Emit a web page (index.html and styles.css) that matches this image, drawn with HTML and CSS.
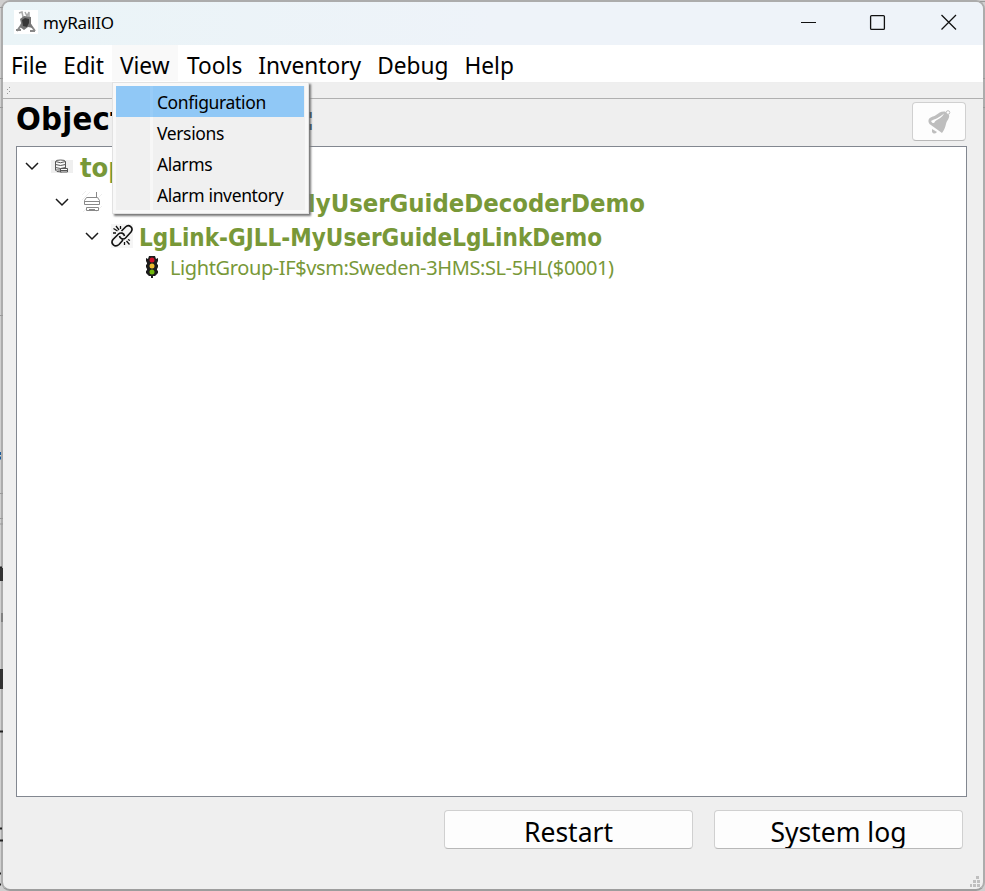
FILE: index.html
```html
<!DOCTYPE html>
<html lang="en">
<head>
<meta charset="utf-8">
<title>myRailIO</title>
<link rel="stylesheet" href="styles.css">
</head>
<body>
<svg class="backdrop" width="985" height="891" viewBox="0 0 985 891" aria-hidden="true">
  <path d="M0 7.500h3M0 78.500h3M0 107.500h3M0 315.500h3M0 493.500h3M0 518.500h3M0 524h3M980 1.500h5M983 78.500h2M983 107.500h2" stroke="#999"/>
  <path d="M0 453.500h1M0 458h1" stroke="#185a9a" stroke-width="3"/>
  <path d="M0 567.500h2M0 731.500h3M0 828.500h2M0 840.500h3M0 873.500h1M0 884.500h1" stroke="#222" stroke-width="2"/>
  <path d="M1.500 568v13M1.500 669v20" stroke="#333" stroke-width="3"/>
  <path d="M2 613v9" stroke="#555"/>
</svg>
<div class="window">
  <header class="titlebar">
    <svg class="appicon" width="24" height="24" viewBox="0 0 24 24"><path d="M0 0h24v24H0z" fill="#fff"/><path d="M5 3l3-1 1 5M11 2l2 4 2-4v5" stroke="#aaa" stroke-width="1.500" fill="none"/><path d="M3 21l5-7M21 21l-5-7M2 20h5M16 21h5" stroke="#888" stroke-width="2" fill="none"/><path d="M6 9l4-3 7 1v7l2 4-5-1-4 3-4-3 1-4z" fill="#777"/><path d="M8 10l3-2 4 1v4l-2 4-4-1z" fill="#383838"/></svg>
    <span class="apptitle">myRailIO</span>
    <svg class="controls" width="160" height="20" viewBox="0 0 160 20" fill="none" stroke="#111"><path d="M1 10.500h15"/><rect x="70.600" y="3.600" width="13.800" height="13.800" rx="1" stroke-width="1.300"/><path d="M141.500 3l14.500 14.500M156 3l-14.500 14.500" stroke-width="1.300"/></svg>
  </header>
  <nav class="menubar">
    <span class="item">File</span><span class="item">Edit</span>
    <div class="item open">View
      <div class="menu">
        <div class="entry active">Configuration</div>
        <div class="entry">Versions</div>
        <div class="entry">Alarms</div>
        <div class="entry">Alarm inventory</div>
      </div>
    </div>
    <span class="item tools">Tools</span><span class="item">Inventory</span><span class="item">Debug</span><span class="item">Help</span>
  </nav>
  <div class="toolbar"><svg width="4" height="8" viewBox="0 0 4 8" fill="#999"><path d="M2 0h1v1h-1zM0 2h1v1h-1zM2 4h1v1h-1zM0 6h1v1h-1z"/></svg></div>
  <main class="content">
    <div class="heading">
      <h1><span>Object</span><span>:</span></h1>
      <button class="bell"><svg width="26" height="26" viewBox="0 0 26 26"><path d="M2.500 11C4 7.500 7 8 10 6C13 4 15 2 19 2.500L23 6C24 9 21 11 20 15C19 19 18 21 16 24L3.500 15Q2 13 2.500 11z" fill="#bebebe"/><path d="M5 12C9 10 13 9 18 4.500C16 9 12 10 9 12.500Q8 15 6 13.500z" fill="#fff"/><circle cx="22" cy="3.500" r="1.800" fill="#fff" stroke="#bebebe"/><path d="M6 20l5 3q-3 3-5 0z" fill="#bebebe"/></svg></button>
    </div>
    <section class="tree">
      <div class="node top"><svg class="chev" width="14" height="10" viewBox="0 0 14 10"><path d="M1 2l6 6 6-6"/></svg>
        <svg class="icon" width="22" height="16" viewBox="0 0 22 16"><path d="M0 2h22v13H0z" fill="#efefef"/><g fill="#fafafa" stroke="#555"><path d="M4.500 3.500q0-1.500 5-1.500t5 1.500v8.500h-10z"/><path d="M4.500 3.500q5 2.500 10 0M4.500 6.500q5 2 10 0M4.500 9.500q5 2 10 0M4.500 12q0 2 6 2"/><path d="M9.500 10.500h7v3.500h-7zM9.500 12.500h7"/></g></svg>
        <span class="name">top</span></div>
      <div class="node decoder"><svg class="chev" width="14" height="10" viewBox="0 0 14 10"><path d="M1 2l6 6 6-6"/></svg>
        <svg class="icon" width="22" height="24" viewBox="0 0 22 24"><path d="M1 5l4-4M1 10l8-8M2 22l4-4M15 22l6-6M17 8l4-4" stroke="#eee"/><g fill="#fff" stroke="#888"><path d="M5.500 7.500h11l2 3v4h-15v-4zM3.500 11.500h15M15.500 2v6M5.500 17.500h12v3h-12zM8 19.500h6"/></g></svg>
        <span class="name">MyUserGuideDecoderDemo</span></div>
      <div class="node link"><svg class="chev" width="14" height="10" viewBox="0 0 14 10"><path d="M1 2l6 6 6-6"/></svg>
        <svg class="icon" width="22" height="24" viewBox="0 0 22 24" fill="none" stroke="#111" stroke-width="1.300"><path d="M0 0h22v24H0z" fill="#f5f5f5" stroke="none"/><path d="M10.500 7l4-4c3.500-3.500 8.500 1 5.500 5l-5.500 6c-2 2-5.500 1-6-2M12 16l-4 4.500c-4 3.500-9-1-6-5l5.500-5.500c2-2 5.500-1 6 2" stroke-width="1.600"/><path d="M2.500 4.500l4 2.500M5 2l3 4M9.500 2v3M2 9h3M13.500 18v3M15.500 17l3 3.500M17 15.500l2 1"/></svg>
        <span class="name">LgLink-GJLL-MyUserGuideLgLinkDemo</span></div>
      <div class="node light">
        <svg class="icon" width="14" height="24" viewBox="0 0 14 24"><path d="M1 3l2 1 1-3h6l1 3 2-1v3l-1 2v2l1-1v3l-1 2v2l1-1v3l-3 3H8v2H6v-2H4l-3-3v-3l1 1v-2l-1-2V9l1 1V8L1 6z" fill="#1c1c1c"/><circle cx="7" cy="5" r="2.500" fill="#d0102a"/><circle cx="7" cy="11" r="2.500" fill="#ecbb2e"/><circle cx="7" cy="17" r="2.500" fill="#70b80c"/></svg>
        <span class="name">LightGroup-IF$vsm:Sweden-3HMS:SL-5HL($0001)</span></div>
    </section>
    <footer class="actions"><button>Restart</button><button>System log</button></footer>
  </main>
  <svg class="grip" width="10" height="11" viewBox="0 0 10 11" fill="#bfbfbf"><path d="M6 0h3v3H6zM3 4h3v3H3zM7 4h3v3H7zM0 8h2v3H0zM3 8h3v3H3zM7 8h3v3H7z"/></svg>
</div>
</body>
</html>
```
FILE: styles.css
```css
* { box-sizing: border-box; }
body { margin: 0; width: 985px; height: 891px; overflow: hidden; background: #cfcfcf; font-family: "Noto Sans", sans-serif; color: #000; }
.backdrop { position: absolute; left: 0; top: 0; z-index: 1; pointer-events: none; }
.window { position: relative; width: 984px; height: 891px; margin-left: 1px; border: 2px solid #acacac; border-bottom-color: #9d9d9d; border-radius: 9px; background: #efefef; display: flex; flex-direction: column; }
.titlebar { height: 43px; flex: none; display: flex; align-items: center; padding: 0 23px 3px 11px; background: linear-gradient(90deg, #eaf4f7, #eef3f9 50%); border-radius: 7px 7px 0 0; }
.apptitle { font-size: 17px; margin-left: 5px; letter-spacing: -0.2px; }
.controls { margin-left: auto; }
.menubar { height: 38px; flex: none; display: flex; background: #fff; border-bottom: 1px solid #eee; font-size: 22.700px; line-height: 42px; white-space: nowrap; }
.item { padding: 0 8px; height: 36px; }
.item.tools { padding-left: 9.500px; }
.item.open { position: relative; background: #f9f9f9; }
.menu { position: absolute; left: 0; top: 37px; width: 197px; height: 132px; padding: 3px; border: 1px solid #e2e2e2; background: #f0f0f0; box-shadow: inset 0 0 0 3px #f8f8f8, 2px 2px 2px #777; z-index: 5; font-size: 17.500px; letter-spacing: -0.35px; line-height: 33px; }
.entry { width: 188px; height: 31px; padding-left: 41px; background: linear-gradient(90deg, transparent 34px, #f7f7f7 34px, #f7f7f7 37px, transparent 37px); }
.entry.active { background: linear-gradient(90deg, #90c8f6 34px, #98ccf7 34px, #98ccf7 37px, #90c8f6 37px); }
.toolbar { height: 16px; flex: none; padding: 4px 4px; border-bottom: 1px solid #b0b0b0; display: flex; }
.content { padding: 3px 16px 0 13px; display: flex; flex-direction: column; }
.heading { height: 44px; display: flex; justify-content: space-between; align-items: flex-start; }
h1 { margin: 0; width: 299px; display: flex; justify-content: space-between; font: bold 32.500px/35px "DejaVu Sans Condensed", sans-serif; letter-spacing: 0.2px; }
button { height: 39px; background: #fdfdfd; border: 1px solid #d0d0d0; border-bottom-color: #b8b8b8; border-radius: 4px; color: #000; padding: 0; overflow: hidden; }
.bell { width: 54px; margin-right: 1px; display: flex; align-items: center; justify-content: center; }
.tree { height: 651px; border: 1px solid #828790; background: #fff; padding-top: 1px; color: #789838; }
.node { display: flex; align-items: center; white-space: nowrap; font: bold 24px "DejaVu Sans Condensed", sans-serif; }
.chev { fill: none; stroke: #1a1a1a; stroke-width: 1.500; margin-right: 12px; flex: none; }
.icon { flex: none; margin-right: 7px; }
.top { padding-left: 8px; height: 36px; font-size: 27px; }
.top .name { margin-top: 2px; }
.decoder { padding-left: 38px; height: 36px; font-size: 25.400px; }
.decoder .name { margin: 2px 0 0 183px; }
.link { padding-left: 68px; height: 32px; font-size: 24px; }
.link .icon { margin-right: 6px; }
.link .name { margin-top: 3px; }
.light { padding-left: 128px; height: 29px; font: 20px "Noto Sans", sans-serif; letter-spacing: -0.390px; }
.light .icon { margin-right: 11px; }
.light .name { margin-top: 2px; }
.actions { display: flex; justify-content: flex-end; gap: 21px; padding: 13px 4px 0 0; }
.actions button { width: 249px; font: 26.500px/38px "Noto Sans", sans-serif; padding-top: 2px; }
.grip { position: absolute; right: 3px; bottom: 2px; }
```
